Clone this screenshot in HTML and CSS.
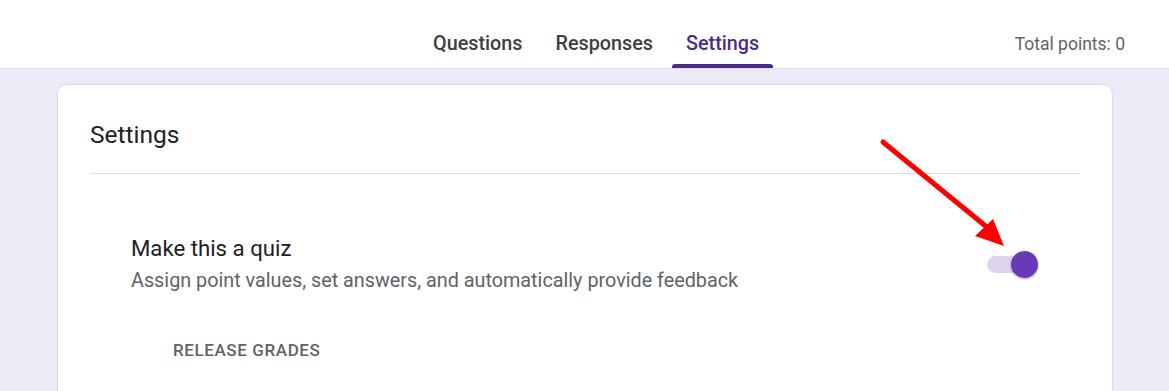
FILE: index.html
```html
<!DOCTYPE html>
<html lang="en">

<head>
  <meta charset="UTF-8" />
  <meta name="viewport" content="width=device-width, initial-scale=1.0" />
  <title>Settings</title>
  <link rel="stylesheet" href="styles.css">
</head>

<body>
  <!-- top bar with tabs -->
  <div class="topbar">
    <div class="tabs">
      <span class="tab">Questions</span>
      <span class="tab">Responses</span>
      <span class="tab active">Settings</span>
    </div>
    <span class="total">Total points: 0</span>
  </div>

  <div class="page">
    <div class="card">
      <h2 class="card-title">Settings</h2>
      <div class="row">
        <div class="row-text">
          <div class="row-title">Make this a quiz</div>
          <div class="row-desc">Assign point values, set answers, and automatically provide feedback</div>
        </div>
        <div class="toggle on"></div>
      </div>
      <div class="sub-head">RELEASE GRADES</div>
    </div>
  </div>

  <!-- red annotation arrow -->
  <svg class="arrow" width="1169" height="391" viewBox="0 0 1169 391">
    <line x1="883" y1="142" x2="988" y2="228" stroke="#ff0000" stroke-width="5" stroke-linecap="round" />
    <polygon points="1004,246 975,236 993,219" fill="#ff0000" />
  </svg>
</body>

</html>
```

FILE: styles.css
```css
* {
  margin: 0;
  padding: 0;
  box-sizing: border-box;
}

body {
  background: #ede9f7;
  font-family: Roboto, "Liberation Sans", sans-serif;
  overflow: hidden;
}

.topbar {
  height: 69px;
  background: #fff;
  border-bottom: 1px solid #dadce0;
  display: flex;
  align-items: flex-start;
  padding-left: 419px;
  padding-right: 44px;
}

.tabs {
  display: flex;
  gap: 5px;
}

.tab {
  position: relative;
  display: block;
  height: 68px;
  padding: 31.5px 14px 0;
  font-size: 19.8px;
  line-height: 24px;
  font-weight: 500;
  color: #3c4043;
}

.tab.active {
  color: #4b2c86;
}

/* underline under the current tab */
.tab.active::after {
  content: "";
  position: absolute;
  left: 0;
  right: 0;
  bottom: 0;
  height: 4px;
  background: #4b2c86;
  border-radius: 3px 3px 0 0;
}

.total {
  margin-left: auto;
  padding-top: 33.5px;
  font-size: 17.5px;
  line-height: 20px;
  color: #5f6368;
}

.page {
  padding: 15px 56px 0 57px;
}

.card {
  background: #fff;
  border: 1px solid #dadce0;
  border-radius: 10px;
  padding: 34px 32px 40px;
  height: 330px;
}

.card-title {
  font-size: 24.5px;
  line-height: 32px;
  font-weight: 400;
  color: #202124;
  padding-bottom: 22px;
  border-bottom: 1px solid #dadce0;
}

.row {
  display: flex;
  align-items: center;
  margin-top: 60px;
  padding-left: 41px;
  padding-right: 42px;
}

.row-text {
  flex: 1;
}

.row-title {
  font-size: 22.2px;
  line-height: 28px;
  color: #202124;
}

.row-desc {
  margin-top: 6px;
  font-size: 19.8px;
  line-height: 26px;
  color: #5f6368;
}

.toggle {
  position: relative;
  width: 51px;
  height: 27px;
}

.toggle::before {
  content: "";
  position: absolute;
  left: 0;
  top: 5px;
  width: 46px;
  height: 17px;
  border-radius: 9px;
  background: #ddd5f0;
}

.toggle::after {
  content: "";
  position: absolute;
  right: 0;
  top: 0;
  width: 27px;
  height: 27px;
  border-radius: 50%;
  background: #673ab7;
  box-shadow: 0 1px 3px rgba(0, 0, 0, 0.3);
}

.sub-head {
  margin-top: 46px;
  padding-left: 83px;
  font-size: 17px;
  line-height: 20px;
  font-weight: 500;
  letter-spacing: 0.6px;
  color: #5f6368;
}

.arrow {
  position: absolute;
  left: 0;
  top: 0;
  pointer-events: none;
}
```
